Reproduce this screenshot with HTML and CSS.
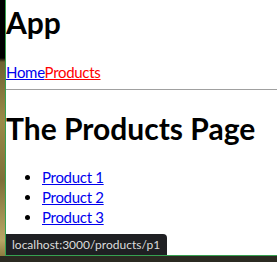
FILE: index.html
```html
<!DOCTYPE html>
<html>
<head>
    <title>App</title>
    <link rel="stylesheet" href="styles.css">
</head>
<body>
    <div class="screen">
        <div class="wallpaper"></div>
        <div class="window">
            <div class="page">
                <h1 class="app-title">App</h1>
                <nav class="nav">
                    <a href="/">Home</a><a class="active" href="/products">Products</a>
                </nav>
                <hr>
                <h1 class="page-title">The Products Page</h1>
                <ul class="products">
                    <li><a href="/products/p1">Product 1</a></li>
                    <li><a href="/products/p2">Product 2</a></li>
                    <li><a href="/products/p3">Product 3</a></li>
                </ul>
            </div>
            <div class="status">localhost:3000/products/p1</div>
        </div>
    </div>
    <div class="taskbar"></div>
</body>
</html>
```

FILE: styles.css
```css
body {
    margin: 0;
    height: 262px;
    overflow: hidden;
    background-color: #2b2a21;
    font-family: Lato, sans-serif;
}
.screen {
    display: flex;
    height: 256px;
}
.wallpaper {
    width: 5px;
    background: linear-gradient(#000 0, #000 58px, #6e6230 62px, #9a8a48 120px, #7d6f38 180px, #b9a766 240px, #8c7c40 256px);
}
.window {
    flex: 1;
    position: relative;
    overflow: hidden;
    background-color: white;
    border-left: 1px solid #36a150;
    border-bottom: 1px solid #36a150;
}
.page {
    color: #000;
}
h1 {
    font-size: 30px;
    font-weight: bold;
    line-height: 40px;
    margin: 0;
    white-space: nowrap;
}
.app-title {
    padding-top: 2px;
}
.nav {
    margin-top: 20px;
    font-size: 15px;
    line-height: 20px;
    letter-spacing: -0.3px;
}
a {
    color: #0000ee;
}
.nav .active {
    color: red;
}
hr {
    border: 0;
    border-top: 1px solid #a0a0a0;
    margin: 7px 0 0;
}
.page-title {
    margin-top: 18px;
}
.products {
    margin: 19px 0 0;
    padding-left: 36px;
    font-size: 15px;
    line-height: 20px;
    letter-spacing: -0.3px;
}
.status {
    position: absolute;
    left: 0;
    bottom: 0;
    height: 21px;
    padding: 0 7px 0 6px;
    background-color: #1f2023;
    color: #dcdcdc;
    font-size: 12px;
    line-height: 21px;
    white-space: nowrap;
    border-top-right-radius: 4px;
}
.taskbar {
    height: 6px;
}
```
